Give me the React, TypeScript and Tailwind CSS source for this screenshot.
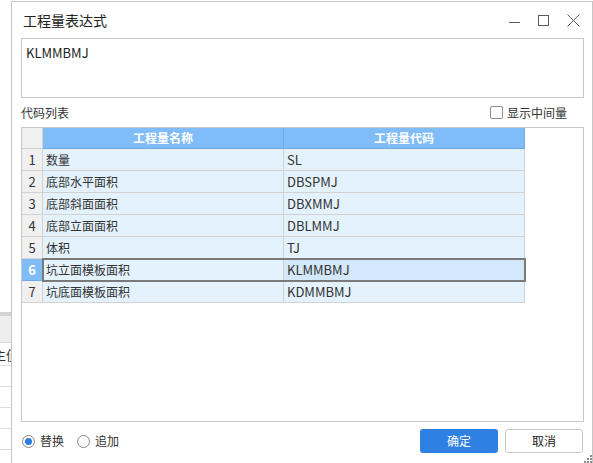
import { useState } from 'react';

const rows = [
  { name: '数量', code: 'SL' },
  { name: '底部水平面积', code: 'DBSPMJ' },
  { name: '底部斜面面积', code: 'DBXMMJ' },
  { name: '底部立面面积', code: 'DBLMMJ' },
  { name: '体积', code: 'TJ' },
  { name: '坑立面模板面积', code: 'KLMMBMJ' },
  { name: '坑底面模板面积', code: 'KDMMBMJ' },
];

function WindowControls() {
  return (
    <div className="flex items-center gap-[18px] text-[#5c5c5c]">
      <svg width="11" height="12" viewBox="0 0 11 12">
        <path d="M0 8.5h11" stroke="currentColor" strokeWidth="1" />
      </svg>
      <svg width="11" height="11" viewBox="0 0 11 11">
        <rect x="0.5" y="0.5" width="10" height="10" fill="none" stroke="currentColor" strokeWidth="1" />
      </svg>
      <svg width="13" height="13" viewBox="0 0 13 13">
        <path d="M0.5 0.5l12 12M12.5 0.5l-12 12" stroke="currentColor" strokeWidth="1" />
      </svg>
    </div>
  );
}

function BackgroundStrip() {
  return (
    <div className="w-[11px] shrink-0 flex flex-col overflow-hidden bg-white">
      <div className="h-[312px]" />
      <div className="h-[4px] bg-[#d3d3d3]" />
      <div className="h-[27px] bg-[#eeeeee] border-b border-[#d8d8d8]" />
      <div className="h-[23px] border-b border-[#dcdcdc] flex items-center">
        <span className="ml-[-7px] whitespace-nowrap text-[13px] leading-none text-[#333]">主值</span>
      </div>
      <div className="h-[21px] border-b border-[#dcdcdc]" />
      <div className="h-[21px] border-b border-[#dcdcdc]" />
      <div className="h-[21px] border-b border-[#dcdcdc]" />
      <div className="h-[21px] border-b border-[#dcdcdc]" />
    </div>
  );
}

export default function App() {
  const [selected, setSelected] = useState(5);
  const [showMid, setShowMid] = useState(false);
  const [mode, setMode] = useState<'replace' | 'append'>('replace');

  return (
    <div className="flex h-[463px] w-[593px] overflow-hidden bg-white font-['Noto_Sans_CJK_SC',sans-serif] text-[12px] text-[#333]">
      <BackgroundStrip />

      <div className="relative mt-px flex flex-1 flex-col border-l border-r border-t border-[#c6c6c6] bg-white">
        {/* title bar */}
        <div className="flex h-[36px] shrink-0 items-center pl-[11px] pr-[12px]">
          <span className="text-[14px] leading-none text-[#222]">工程量表达式</span>
          <div className="ml-auto">
            <WindowControls />
          </div>
        </div>

        <div className="flex flex-1 flex-col pl-[9px] pr-[8px]">
          <div className="h-[60px] shrink-0 border border-[#c8c8c8] px-[4px] pt-[5px] text-[13px] leading-[18px] text-[#222]">
            {rows[selected].code}
          </div>

          <div className="flex h-[29px] shrink-0 items-center">
            <span className="leading-none">代码列表</span>
            <label className="ml-auto mr-[17px] flex cursor-pointer items-center gap-[4px]" onClick={() => setShowMid(!showMid)}>
              <span className="flex h-[13px] w-[13px] items-center justify-center rounded-[2px] border border-[#8a8a8a] bg-white text-[10px] leading-none">
                {showMid ? '✓' : ''}
              </span>
              <span className="leading-none">显示中间量</span>
            </label>
          </div>

          {/* grid */}
          <div className="h-[295px] shrink-0 border border-[#c8c8c8] bg-white">
            <div className="flex w-[503px] flex-col">
              <div className="flex h-[21px]">
                <div className="w-[21px] border-b border-r border-[#d2d2d2] bg-[#f0f0f0]" />
                <div className="flex w-[241px] items-center justify-center border-b border-r border-[#6ea9ea] bg-[#80bcf8] font-bold leading-none text-white">
                  工程量名称
                </div>
                <div className="flex w-[241px] items-center justify-center border-b border-r border-[#6ea9ea] bg-[#80bcf8] font-bold leading-none text-white">
                  工程量代码
                </div>
              </div>
              {rows.map((r, i) => {
                const sel = i === selected;
                return (
                  <div key={r.code} className="flex h-[22px] cursor-default" onClick={() => setSelected(i)}>
                    <div
                      className={
                        sel
                          ? 'flex w-[21px] items-center justify-center border-b border-r border-[#6ea9ea] bg-[#80bcf8] text-[13px] font-bold leading-none text-white'
                          : 'flex w-[21px] items-center justify-center border-b border-r border-[#d2d2d2] bg-[#f0f0f0] text-[13px] leading-none text-[#333]'
                      }
                    >
                      {i + 1}
                    </div>
                    <div className={sel ? 'relative z-10 flex outline-2 -outline-offset-1 outline-[#7a7a7a]' : 'flex'}>
                      <div className="flex w-[241px] items-center border-b border-r border-[#d2d2d2] bg-[#e4f2fe] pl-[3px] leading-none">
                        {r.name}
                      </div>
                      <div
                        className={
                          sel
                            ? 'flex w-[241px] items-center border-b border-r border-[#d2d2d2] bg-[#d4e8fc] pl-[3px] text-[13px] leading-none'
                            : 'flex w-[241px] items-center border-b border-r border-[#d2d2d2] bg-[#e4f2fe] pl-[3px] text-[13px] leading-none'
                        }
                      >
                        {r.code}
                      </div>
                    </div>
                  </div>
                );
              })}
            </div>
          </div>

          {/* bottom bar */}
          <div className="flex items-start pt-[7px]">
            <div className="flex h-[24px] items-center pl-[1px]">
              <label className="flex cursor-pointer items-center gap-[5px]" onClick={() => setMode('replace')}>
                <span className="flex h-[13px] w-[13px] items-center justify-center rounded-full border border-[#8a8a8a] bg-white">
                  {mode === 'replace' && <span className="h-[7px] w-[7px] rounded-full bg-[#2b7de1]" />}
                </span>
                <span className="leading-none">替换</span>
              </label>
              <label className="ml-[13px] flex cursor-pointer items-center gap-[5px]" onClick={() => setMode('append')}>
                <span className="flex h-[13px] w-[13px] items-center justify-center rounded-full border border-[#8a8a8a] bg-white">
                  {mode === 'append' && <span className="h-[7px] w-[7px] rounded-full bg-[#2b7de1]" />}
                </span>
                <span className="leading-none">追加</span>
              </label>
            </div>
            <div className="ml-auto mr-px flex gap-[7px]">
              <button className="h-[24px] w-[78px] rounded-[3px] bg-[#2e80e2] leading-none text-white">确定</button>
              <button className="h-[24px] w-[78px] rounded-[3px] border border-[#c8c8c8] bg-white leading-none text-[#222]">取消</button>
            </div>
          </div>
        </div>

        <svg className="absolute bottom-0 right-0" width="8" height="8" viewBox="0 0 8 8">
          <rect x="6" y="0" width="2" height="2" fill="#8c8c8c" />
          <rect x="3" y="3" width="2" height="2" fill="#8c8c8c" />
          <rect x="6" y="3" width="2" height="2" fill="#8c8c8c" />
          <rect x="0" y="6" width="2" height="2" fill="#8c8c8c" />
          <rect x="3" y="6" width="2" height="2" fill="#8c8c8c" />
          <rect x="6" y="6" width="2" height="2" fill="#8c8c8c" />
        </svg>
      </div>
    </div>
  );
}
